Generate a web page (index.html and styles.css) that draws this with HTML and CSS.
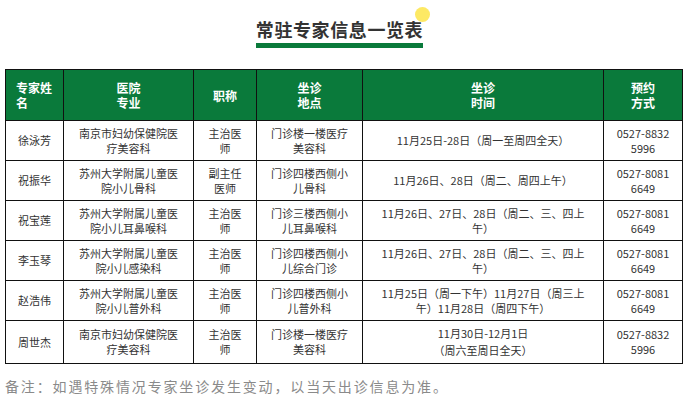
FILE: index.html
```html
<!DOCTYPE html>
<html lang="zh">
<head>
<meta charset="utf-8">
<link rel="stylesheet" href="styles.css">
</head>
<body>
<div class="title-wrap">
  <div class="title">
    <span class="dot"></span>
    <h1>常驻专家信息一览表</h1>
    <div class="bar"></div>
  </div>
</div>
<table class="tbl">
  <colgroup>
    <col class="c1"><col class="c2"><col class="c3"><col class="c4"><col class="c5"><col class="c6">
  </colgroup>
  <thead>
    <tr>
      <th class="left">专家姓<br>名</th>
      <th>医院<br>专业</th>
      <th>职称</th>
      <th>坐诊<br>地点</th>
      <th>坐诊<br>时间</th>
      <th>预约<br>方式</th>
    </tr>
  </thead>
  <tbody>
    <tr>
      <td>徐泳芳</td>
      <td>南京市妇幼保健院医<br>疗美容科</td>
      <td>主治医<br>师</td>
      <td>门诊楼一楼医疗<br>美容科</td>
      <td>11月25日-28日（周一至周四全天）</td>
      <td>0527-8832<br>5996</td>
    </tr>
    <tr>
      <td>祝振华</td>
      <td>苏州大学附属儿童医<br>院小儿骨科</td>
      <td>副主任<br>医师</td>
      <td>门诊四楼西侧小<br>儿骨科</td>
      <td>11月26日、28日（周二、周四上午）</td>
      <td>0527-8081<br>6649</td>
    </tr>
    <tr>
      <td>祝宝莲</td>
      <td>苏州大学附属儿童医<br>院小儿耳鼻喉科</td>
      <td>主治医<br>师</td>
      <td>门诊三楼西侧小<br>儿耳鼻喉科</td>
      <td>11月26日、27日、28日（周二、三、四上<br>午）</td>
      <td>0527-8081<br>6649</td>
    </tr>
    <tr>
      <td>李玉琴</td>
      <td>苏州大学附属儿童医<br>院小儿感染科</td>
      <td>主治医<br>师</td>
      <td>门诊四楼西侧小<br>儿综合门诊</td>
      <td>11月26日、27日、28日（周二、三、四上<br>午）</td>
      <td>0527-8081<br>6649</td>
    </tr>
    <tr>
      <td>赵浩伟</td>
      <td>苏州大学附属儿童医<br>院小儿普外科</td>
      <td>主治医<br>师</td>
      <td>门诊四楼西侧小<br>儿普外科</td>
      <td>11月25日（周一下午）11月27日（周三上<br>午）11月28日（周四下午）</td>
      <td>0527-8081<br>6649</td>
    </tr>
    <tr class="last">
      <td>周世杰</td>
      <td>南京市妇幼保健院医<br>疗美容科</td>
      <td>主治医<br>师</td>
      <td>门诊楼一楼医疗<br>美容科</td>
      <td class="tall">11月30日-12月1日<br>（周六至周日全天）</td>
      <td>0527-8832<br>5996</td>
    </tr>
  </tbody>
</table>
<p class="note">备注：如遇特殊情况专家坐诊发生变动，以当天出诊信息为准。</p>
</body>
</html>
```
FILE: styles.css
```css
html, body {
  margin: 0;
  padding: 0;
  background: #ffffff;
}
body {
  width: 688px;
  height: 401px;
  overflow: hidden;
  font-family: "Noto Sans CJK SC", "Noto Sans", sans-serif;
  color: #333333;
}
.title-wrap {
  display: flex;
  justify-content: center;
  padding-top: 17px;
  padding-right: 9px;
  height: 69px;
  box-sizing: border-box;
}
.title {
  position: relative;
  display: flex;
  flex-direction: column;
  align-items: stretch;
  height: 32px;
}
.title h1 {
  position: relative;
  margin: 0;
  font-size: 18px;
  line-height: 24px;
  font-weight: 700;
  letter-spacing: 0.6px;
  color: #333333;
  z-index: 1;
}
.dot {
  position: absolute;
  right: -7px;
  top: -10px;
  width: 15px;
  height: 15px;
  border-radius: 50%;
  background: #fde964;
  z-index: 0;
}
.bar {
  height: 5px;
  margin-top: 2px;
  background: #0a7a3b;
}
.tbl {
  margin-left: 5px;
  width: 677px;
  border-collapse: collapse;
  table-layout: fixed;
  font-size: 11px;
  line-height: 15px;
}
.c1 { width: 58px; }
.c2 { width: 130px; }
.c3 { width: 63px; }
.c4 { width: 106px; }
.c5 { width: 241px; }
.c6 { width: 79px; }
.tbl th, .tbl td {
  border: 1px solid #111111;
  padding: 0 2px;
  text-align: center;
  vertical-align: middle;
}
.tbl th {
  background: #0a7a3b;
  color: #ffffff;
  font-size: 12px;
  font-weight: 700;
  height: 50px;
}
.tbl th.left {
  text-align: left;
  padding-left: 10px;
}
.tbl td {
  height: 39px;
  color: #333333;
}
.tbl tr.last td {
  height: 42px;
}
.tbl td.tall {
  line-height: 17px;
}
.note {
  margin: 13px 0 0 5px;
  font-size: 14px;
  line-height: 18px;
  letter-spacing: 1.85px;
  color: #8a8a8a;
}
```
